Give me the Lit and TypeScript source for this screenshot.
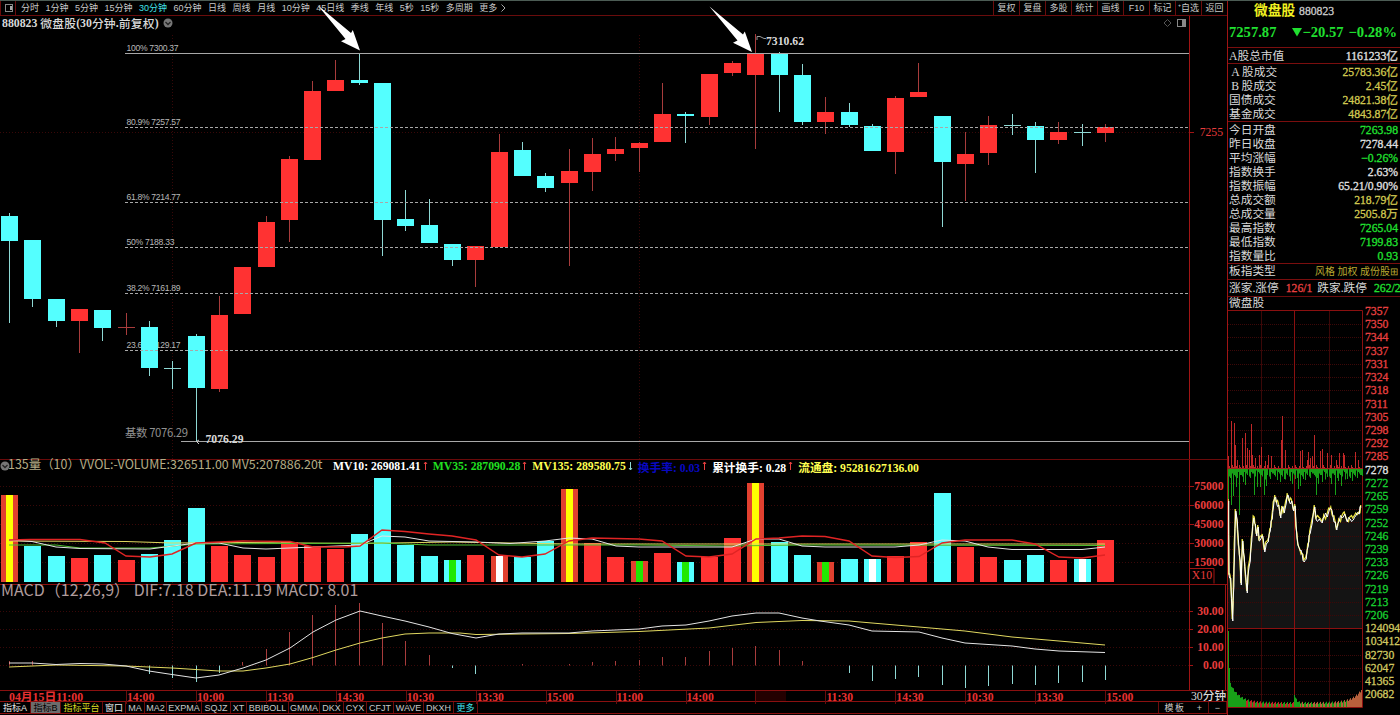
import {LitElement, html, svg, css, nothing} from 'lit';
import {customElement} from 'lit/decorators.js';
import {classMap} from 'lit/directives/class-map.js';

// [high, body top, body bottom, low, falling]
type Candle = [number, number, number, number, number];
type Point = [number, number];

const STEP = 23.32;
const slotX = (i: number) => 9 + i * STEP;

const CANDLES: Candle[] = [
  [213, 216, 241, 323, 1], [240, 240, 299, 307, 1], [299, 299, 321, 327, 1],
  [309, 309, 321, 353, 0], [310, 310, 328, 341, 1], [313, 327, 328, 335, 0],
  [321, 327, 368, 376, 1], [361, 368, 369, 389, 1], [334, 336, 388, 441, 1],
  [296, 315, 389, 392, 0], [267, 267, 314, 314, 0], [216, 222, 267, 267, 0],
  [156, 159, 220, 242, 0], [81, 91, 160, 160, 0], [60, 80, 91, 91, 0],
  [53, 80, 83, 85, 1], [83, 83, 220, 256, 1], [190, 219, 226, 231, 1],
  [199, 225, 243, 243, 1], [244, 244, 260, 266, 1], [246, 246, 260, 287, 0],
  [134, 152, 247, 247, 0], [142, 150, 176, 176, 1], [173, 176, 188, 192, 1],
  [149, 171, 183, 266, 0], [138, 154, 172, 191, 0], [137, 149, 154, 161, 0],
  [142, 143, 148, 172, 0], [83, 114, 142, 142, 0], [112, 114, 116, 143, 1],
  [74, 74, 117, 125, 0], [61, 63, 73, 76, 0], [34, 53, 75, 149, 0],
  [52, 53, 75, 112, 1], [64, 75, 122, 125, 1], [97, 112, 122, 134, 0],
  [103, 112, 125, 127, 1], [124, 126, 151, 151, 1], [96, 98, 152, 174, 0],
  [63, 92, 97, 97, 0], [116, 116, 162, 227, 1], [132, 154, 164, 201, 0],
  [116, 125, 153, 165, 0], [114, 125, 126, 135, 1], [122, 126, 140, 173, 1],
  [122, 132, 140, 144, 0], [124, 132, 133, 146, 1], [124, 127, 133, 142, 0],
];

const VOLUME_TOPS = [
  495, 546, 556, 558, 555, 560, 554, 540, 508, 546, 555, 557, 542, 546, 549,
  534, 478, 545, 556, 560, 555, 556, 557, 541, 489, 543, 557, 561, 553, 562,
  557, 538, 483, 542, 555, 562, 559, 559, 556, 542, 493, 547, 557, 560, 555,
  560, 559, 540,
];

const VOLUME_STRIPES: Record<number, string> = {
  0: 'yellow', 19: 'green', 21: 'white', 24: 'yellow', 27: 'green',
  29: 'green', 32: 'yellow', 35: 'green', 37: 'white', 46: 'white',
};

const VOLUME_LINES: [string, Point[]][] = [
  ['yellow', [[9, 541], [126, 541.5], [172, 543], [243, 542.5], [360, 543.5], [452, 542], [510, 543], [569, 544], [1105, 544]]],
  ['green', [[9, 545], [56, 545], [80, 548], [150, 548], [196, 544], [382, 543], [429, 545], [639, 545], [732, 546], [802, 545], [1105, 545.5]]],
  ['white', [[9, 540], [32, 541.5], [56, 547], [80, 548.5], [150, 549], [196, 543], [219, 543], [243, 548], [266, 549], [313, 547], [360, 545], [382, 536], [405, 537], [429, 541], [476, 542], [510, 543.5], [545, 541], [569, 538], [592, 539], [616, 546], [639, 547], [732, 547], [756, 539], [779, 539], [802, 546], [825, 547], [895, 547], [919, 545], [942, 540], [965, 541], [988, 547], [1012, 549.5], [1082, 549.5], [1105, 547]]],
  ['red', [[9, 540], [30, 539.5], [80, 539.5], [105, 543], [126, 556], [150, 557], [172, 554], [196, 543], [243, 541], [290, 541.5], [313, 547], [345, 547], [360, 546], [382, 530], [405, 531.5], [429, 534], [452, 536], [476, 540], [499, 555], [522, 557], [545, 554], [569, 541], [592, 538], [639, 539], [662, 541], [686, 556], [709, 557], [732, 554], [756, 539], [779, 538], [802, 536], [825, 536.5], [849, 541], [872, 556], [895, 557.5], [919, 556.5], [942, 543], [965, 540], [1012, 540], [1035, 544], [1059, 557], [1082, 558], [1105, 555]]],
];

const MACD_ZERO = 665.5;
const MACD_BARS: Point[] = [
  [0, 661], [1, 661], [6, 674], [7, 678], [8, 682], [9, 673], [10, 662],
  [11, 649], [12, 632], [13, 615], [14, 605], [15, 603], [16, 623], [17, 641],
  [18, 655], [19, 668], [20, 674], [22, 664], [24, 664], [25, 662], [26, 661],
  [27, 660], [28, 657], [29, 657], [30, 651], [31, 648], [32, 646], [33, 650],
  [34, 661], [36, 673], [37, 681], [38, 679], [39, 677], [40, 685], [41, 688],
  [42, 686], [43, 684], [44, 685], [45, 683], [46, 682], [47, 680],
];

const DIF: Point[] = [[9, 663], [32, 663], [56, 664.5], [80, 663.5], [103, 664], [126, 666], [149, 671], [172, 674.5], [196, 678], [219, 675], [243, 668], [266, 660], [290, 648], [313, 632], [336, 620], [360, 611], [382, 616], [405, 621], [429, 627], [452, 633.5], [476, 638], [499, 634], [522, 633], [569, 633], [592, 631], [639, 629], [662, 626], [686, 625], [709, 621], [732, 616], [756, 613], [779, 613], [802, 618], [820, 621], [849, 625], [872, 631], [919, 632], [942, 638], [965, 643], [1012, 646], [1035, 649], [1059, 651], [1105, 652.5]];
const DEA: Point[] = [[9, 667], [56, 665], [126, 666], [172, 668], [219, 671], [243, 671], [266, 668], [290, 664], [313, 657.5], [336, 650], [360, 643], [382, 638], [405, 634], [429, 633], [460, 633], [476, 634.5], [569, 633.5], [639, 631.5], [709, 628], [756, 622.5], [802, 620.5], [849, 621], [872, 623], [919, 627], [965, 631], [1012, 637], [1059, 641], [1105, 645]];

// [y, label, label width]
const FIB_LEVELS: [number, string, number][] = [
  [127.5, '80.9% 7257.57', 54],
  [202.5, '61.8% 7214.77', 54],
  [247.5, '50% 7188.33', 48],
  [293.5, '38.2% 7161.89', 54],
  [350.5, '23.6% 7129.17', 54],
];

const INTRADAY: Point[] = [[1228.5, 500], [1228.9, 575], [1230.5, 577], [1232.5, 620], [1233.6, 585], [1234.5, 545], [1235.5, 510], [1237, 520], [1238.5, 545], [1240, 560], [1241, 584], [1242.5, 540], [1244, 556], [1245.5, 575], [1247, 592], [1248.5, 568], [1250, 560], [1251.5, 540], [1253.5, 517], [1255, 523], [1256.5, 535], [1258, 526], [1259, 540], [1261, 537], [1262.5, 535], [1264.5, 551], [1266, 543], [1268, 541], [1270, 530], [1272, 518], [1273.5, 503], [1275, 496], [1276.5, 503], [1278.5, 504], [1280.5, 517], [1282, 507], [1284, 512], [1286, 502], [1287.5, 494], [1289.5, 502], [1291.5, 500], [1293.5, 510], [1295, 505], [1296, 527], [1298, 545], [1300, 550], [1302, 554], [1304, 561], [1306, 558], [1308, 545], [1310, 532], [1312, 522], [1314.5, 506], [1316, 519], [1319, 518], [1322, 522], [1324, 516], [1327, 516], [1329, 509], [1331, 508], [1333, 517], [1335, 521], [1336.5, 529], [1339, 520], [1342, 517], [1344.5, 513], [1347, 521], [1350, 518], [1353, 519], [1356, 514], [1359, 513], [1361, 506]];

// [x, length] of the advance and decline spikes around the zero line
const ADVANCES: Point[] = [[1228, 12], [1231, 47], [1234, 45], [1235, 23], [1237, 8], [1242, 30], [1245, 35], [1247, 20], [1249, 18], [1251, 44], [1252, 13], [1255, 10], [1259, 13], [1261, 21], [1265, 7], [1268, 13], [1271, 12], [1281, 28], [1282, 52], [1285, 18], [1300, 17], [1302, 18], [1307, 8], [1308, 16], [1310, 10], [1312, 12], [1314, 33], [1320, 17], [1322, 19], [1327, 15], [1331, 13], [1336, 8], [1339, 15], [1343, 15], [1344, 13], [1355, 16], [1358, 8]];
const DECLINES: Point[] = [[1228, 36], [1231, 36], [1233, 27], [1236, 18], [1239, 46], [1243, 13], [1245, 16], [1250, 7], [1254, 26], [1257, 18], [1260, 18], [1264, 26], [1266, 17], [1270, 10], [1277, 11], [1280, 13], [1284, 10], [1290, 12], [1292, 15], [1295, 10], [1298, 20], [1300, 17], [1303, 10], [1305, 11], [1316, 26], [1318, 15], [1322, 13], [1327, 8], [1331, 15], [1335, 26], [1338, 12], [1341, 17], [1347, 10], [1352, 12], [1357, 5], [1362, 7]];

const PERIODS = ['分时', '1分钟', '5分钟', '15分钟', '30分钟', '60分钟', '日线', '周线', '月线', '10分钟', '45日线', '季线', '年线', '5秒', '15秒', '多周期', '更多'];
const TOOLS = ['复权', '复盘', '多股', '统计', '画线', 'F10', '标记', '⁺自选', '返回'];
const TIMES = ['14:00', '10:00', '11:30', '14:30', '10:30', '13:30', '15:00', '11:00', '14:00', '', '11:30', '14:30', '10:30', '13:30', '15:00'];

// [text, cell width, modifier]
const TABS: [string, number, string][] = [
  ['指标A', 31, 'bright'], ['指标B', 30, 'active'], ['指标平台', 42, 'yellow'],
  ['窗口', 23, 'bright'], ['MA', 19, ''], ['MA2', 22, ''], ['EXPMA', 35, ''],
  ['SQJZ', 29, ''], ['XT', 16, ''], ['BBIBOLL', 42, ''], ['GMMA', 31, ''],
  ['DKX', 24, ''], ['CYX', 23, ''], ['CFJT', 27, ''], ['WAVE', 30, ''],
  ['DKXH', 30, ''], ['更多', 24, 'cyan'],
];

const QUOTE_GROUPS: [string, string, string][][] = [
  [['A股总市值', '1161233亿', 'white']],
  [
    ['\u2009A\u2009股成交', '25783.36亿', 'yellow'],
    ['\u2009B\u2009股成交', '2.45亿', 'yellow'],
    ['国债成交', '24821.38亿', 'yellow'],
    ['基金成交', '4843.87亿', 'yellow'],
  ],
  [
    ['今日开盘', '7263.98', 'green'],
    ['昨日收盘', '7278.44', 'white'],
    ['平均涨幅', '−0.26%', 'green'],
    ['指数换手', '2.63%', 'white'],
    ['指数振幅', '65.21/0.90%', 'white'],
    ['总成交额', '218.79亿', 'yellow'],
    ['总成交量', '2505.8万', 'yellow'],
    ['最高指数', '7265.04', 'green'],
    ['最低指数', '7199.83', 'green'],
    ['指数量比', '0.93', 'green'],
  ],
];

const PRICE_SCALE = [7357, 7350, 7344, 7337, 7331, 7324, 7318, 7311, 7305, 7298, 7292, 7285, 7278, 7272, 7265, 7259, 7252, 7246, 7239, 7233, 7226, 7219, 7213, 7206];
const VOLUME_SCALE = [124094, 103412, 82730, 62047, 41365, 20682];

const toPoints = (points: Point[]) => points.map((p) => p.join(',')).join(' ');

@customElement('kline-chart')
export class KlineChart extends LitElement {
  static styles = css`
    :host {
      display: block;
      font-family: 'Liberation Serif', 'Noto Sans CJK SC', serif;
      color: #d8d8d8;
    }

    svg {
      display: block;
      overflow: visible;
    }

    text {
      white-space: pre;
    }

    .panel {
      box-sizing: border-box;
      display: grid;
      grid-template-columns: 1189px 37px;
    }

    .price {
      height: 443px;
    }

    .volume {
      height: 125px;
      border-top: 1px solid #6a0a0a;
    }

    .macd {
      height: 106px;
      border-top: 1px solid #8a1010;
    }

    .plot {
      display: flex;
      flex-direction: column;
      min-width: 0;
    }

    .scale {
      border-left: 1px solid #a01414;
    }

    .macd .scale {
      border-right: 1px solid #a01414;
    }

    .title {
      display: flex;
      align-items: center;
      height: 15px;
      padding: 0 2px 1px 2px;
      box-sizing: border-box;
      font-size: 11.8px;
      font-weight: bold;
      white-space: pre;
    }

    .title .cjk {
      font-weight: 500;
      letter-spacing: 0.15px;
    }

    .title .toggle {
      margin-left: 4px;
    }

    .title .tools {
      margin-left: auto;
    }

    .volume-head {
      display: flex;
      align-items: center;
      height: 14px;
      box-sizing: border-box;
      padding-bottom: 2px;
      font-size: 11.7px;
      font-weight: bold;
      white-space: nowrap;
    }

    .volume-name {
      width: 325px;
      margin-left: -2px;
      font: 12.45px/9px 'Noto Sans CJK SC', sans-serif;
      color: #b5ad86;
      padding-bottom: 4px;
      white-space: pre;
    }

    .macd-head {
      height: 13px;
      font: 16px/9px 'Noto Sans CJK SC', sans-serif;
      color: #b09c9c;
      padding-left: 1px;
      box-sizing: border-box;
      white-space: pre;
    }

    .reading.white { color: #fff; }
    .reading.green { color: #20e020; }
    .reading.yellow { color: #ffff50; }
    .reading.blue { color: #0808c0; }

    .fill-up { fill: #ff3232; }
    .fill-striped { fill: #e2402f; }
    .fill-down { fill: #54ffff; }
    .wick-up { stroke: #a83c3c; }
    .wick-down { stroke: #8ed8d4; }
    .stripe-yellow { fill: #ffff00; }
    .stripe-green { fill: #20e800; }
    .stripe-white { fill: #ffffff; }

    .level { stroke: #a8a8a8; }
    .dashed { stroke-dasharray: 3 2; }
    .grid { stroke: #380808; stroke-dasharray: 1 2; }
    .axis-tick { stroke: #a01414; }
    .level-label {
      font: 8.6px 'Liberation Sans', sans-serif;
      fill: #b8b8b8;
    }
    .base-label {
      font: 11.3px 'Noto Sans CJK SC', sans-serif;
      fill: #909090;
    }
    .extreme {
      font-size: 11.7px;
      font-weight: bold;
      fill: #d8d8d8;
    }
    .scale-label {
      font-size: 11.7px;
      font-weight: bold;
      fill: #e83c3c;
      text-anchor: end;
    }
    .scale-label.light { font-weight: normal; }

    .line { fill: none; stroke-width: 1; }
    .line.red { stroke: #e02424; stroke-width: 1.4; }
    .line.green { stroke: #50c030; }
    .line.yellow { stroke: #e0d860; }
    .line.white { stroke: #e4e4e4; }

    .times {
      display: grid;
      grid-template-columns: 126px repeat(14, 69.95px) 1fr 37px;
      height: 12px;
      box-sizing: border-box;
      border-top: 1px solid #8a1010;
      border-bottom: 1px solid #8a1010;
      font-size: 11.7px;
      font-weight: bold;
      line-height: 13px;
      color: #e83030;
      white-space: nowrap;
    }

    .time {
      border-left: 1px solid #6a0c0c;
    }

    .date {
      padding-left: 9px;
      font-size: 11.8px;
      line-height: 12px;
    }

    .dim {
      width: 30px;
      height: 10px;
      background: #240000;
    }

    .unit {
      color: #d8d8d8;
      font-weight: 500;
      font-size: 11.7px;
      line-height: 11px;
      padding-left: 1px;
    }
  `;

  render() {
    return html`
      <section class="panel price">
        <div class="plot">
          <div class="title">
            <span>880823 </span><span class="cjk">微盘股</span><span>(30</span><span class="cjk">分钟</span><span>.</span><span class="cjk">前复权</span><span>)</span>
            ${this._renderToggle('toggle')}
            <svg class="tools" width="24" height="10" viewBox="0 0 24 10">
              <path d="M4.500 1.500L8 5L4.500 8.500L1 5Z" fill="none" stroke="#555" />
              <rect x="14.500" y="1.500" width="8" height="7" fill="none" stroke="#888" />
              <rect x="19" y="2" width="3" height="6" fill="#888" />
            </svg>
          </div>
          ${this._renderPricePlot()}
        </div>
        <svg class="scale" width="36" height="443" viewBox="1190 16 36 443">
          <path class="axis-tick" d="M1190 132.500h4" />
          <text class="scale-label light" x="1223" y="136">7255</text>
        </svg>
      </section>
      <section class="panel volume">
        <div class="plot">
          <div class="volume-head">
            ${this._renderToggle('')}
            <span class="volume-name">135量（10）VVOL:-VOLUME:326511.00 MV5:207886.20t</span>
            ${this._renderReading('MV10: 269081.41', 'white', true)}
            ${this._renderReading('MV35: 287090.28', 'green', true)}
            ${this._renderReading('MV135: 289580.75', 'yellow', false)}
            ${this._renderReading('换手率: 0.03', 'blue', true)}
            ${this._renderReading('累计换手: 0.28', 'white', true)}
            ${this._renderReading('流通盘: 95281627136.00', 'yellow', null)}
          </div>
          ${this._renderVolumePlot()}
        </div>
        <svg class="scale" width="36" height="124" viewBox="1190 460 36 124">
          ${[75000, 60000, 45000, 30000, 15000].map(
            (v, i) => svg`
              <path class="axis-tick" d="M1190 ${486.5 + i * 19}h4" />
              <text class="scale-label" x="1223.500" y=${490 + i * 19}>${v}</text>
            `
          )}
          <path class="axis-tick" d="M1190 568.500h24v15" fill="none" />
          <text class="scale-label light" x="1212" y="578.500">X10</text>
        </svg>
      </section>
      <section class="panel macd">
        <div class="plot">
          <div class="macd-head">MACD（12,26,9） DIF:7.18 DEA:11.19 MACD: 8.01</div>
          ${this._renderMacdPlot()}
        </div>
        <svg class="scale" width="35" height="105" viewBox="1190 585 35 105">
          ${['30.00', '20.00', '10.00', '0.00'].map(
            (v, i) => svg`
              <path class="axis-tick" d="M1190 ${611.5 + i * 18}h3" />
              <text class="scale-label" x="1223.500" y=${614.5 + i * 18.2}>${v}</text>
            `
          )}
        </svg>
      </section>
      <div class="times">
        <div class="date">04月15日11:00</div>
        ${TIMES.map((t) => html`<div class="time">${t || html`<div class="dim"></div>`}</div>`)}
        <div class="unit">30分钟</div>
      </div>
    `;
  }

  _renderToggle(name: string) {
    return html`
      <svg class=${name} width="10" height="10" viewBox="0 0 10 10">
        <circle cx="5" cy="5" r="4.500" fill="#777" />
        <path d="M2.500 4L5 6.500L7.500 4" fill="none" stroke="#222" stroke-width="1.300" />
      </svg>
    `;
  }

  _renderReading(text: string, color: string, rising: boolean | null) {
    return html`<span class="reading ${color}">${text}</span>${rising === null
        ? nothing
        : html`<svg width="12" height="10" viewBox="0 0 12 10">
            ${rising
              ? svg`<path d="M4.500 9V1M3 3L4.500 1L6 3" fill="none" stroke="#e84040" />`
              : svg`<path d="M4.500 1V9M3 7L4.500 9L6 7" fill="none" stroke="#8ed8d4" />`}
          </svg>`}`;
  }

  _renderPricePlot() {
    return html`
      <svg width="1189" height="428" viewBox="0 31 1189 428">
        <path class="grid" d="M0 132.500H1189M172.500 35V459M639.500 35V459" />
        <text class="level-label" x="126.500" y="51" textLength="52">100% 7300.37</text>
        ${FIB_LEVELS.map(
          ([y, label, width]) => svg`
            <text class="level-label" x="126.500" y=${y - 2.5} textLength=${width}>${label}</text>
          `
        )}
        <text class="base-label" x="125" y="437" textLength="63">基数 7076.29</text>
        ${CANDLES.map((c, i) => this._renderCandle(c, i))}
        <path class="level" d="M125 53.500H1189" />
        <path class="level" d="M181 441.500H1189" />
        ${FIB_LEVELS.map(([y]) => svg`<path class="level dashed" d="M125 ${y}H1189" />`)}
        <path d="M757 40V36.500H760L764 38.500H766" fill="none" stroke="#999" />
        <path d="M199 444L196.500 441.500L199 440" fill="none" stroke="#ccc" />
        <text class="extreme" x="766" y="44.500">7310.62</text>
        <text class="extreme" x="205.500" y="443">7076.29</text>
        ${this._renderArrow(-392, -1.5)} ${this._renderArrow(0, 0)}
      </svg>
    `;
  }

  _renderCandle([high, top, bottom, low, falling]: Candle, i: number) {
    const x = Math.round(slotX(i));
    const kind = falling ? 'down' : 'up';
    return svg`
      <path class="wick-${kind}" d="M${x + 0.5} ${high}V${low}" />
      ${
        bottom - top < 2
          ? svg`<path class="wick-${kind}" d="M${x - 8} ${top + 0.5}h17" />`
          : svg`<rect class="fill-${kind}" x=${x - 8} y=${top} width="17" height=${bottom - top} />`
      }
    `;
  }

  _renderArrow(dx: number, dy: number) {
    return svg`
      <path
        transform="translate(${dx} ${dy})"
        d="M709.500 6.500L743 34.500L744.800 31.500L752 52L733 42.700L737.500 40.500Z"
        fill="#fff"
      />
    `;
  }

  _renderVolumePlot() {
    return html`
      <svg width="1189" height="110" viewBox="0 474 1189 110">
        <path
          class="grid"
          d="M0 486.500H1189M0 505.500H1189M0 524.500H1189M0 543.500H1189M0 562.500H1189M172.500 474V584M639.500 474V584"
        />
        ${VOLUME_TOPS.map((top, i) => {
          const x = Math.round(slotX(i));
          const stripe = VOLUME_STRIPES[i];
          const climax = stripe === 'yellow';
          const kind = CANDLES[i][4] && !climax ? 'down' : stripe ? 'striped' : 'up';
          return svg`
            <rect class="fill-${kind}" x=${x - 8} y=${top} width="17" height=${582 - top} />
            ${stripe ? svg`<rect class="stripe-${stripe}" x=${x - 3} y=${top} width="7" height=${582 - top} />` : nothing}
          `;
        })}
        ${VOLUME_LINES.map(([color, points]) => svg`<polyline class="line ${color}" points=${toPoints(points)} />`)}
      </svg>
    `;
  }

  _renderMacdPlot() {
    return html`
      <svg width="1189" height="92" viewBox="0 598 1189 92">
        <path
          class="grid"
          d="M0 611.500H1189M0 629.500H1189M0 647.500H1189M0 665.500H1189M172.500 598V690M639.500 598V690"
        />
        ${MACD_BARS.map(([i, y]) => {
          const kind = y > MACD_ZERO ? 'down' : 'up';
          return svg`<path class="wick-${kind}" d="M${Math.round(slotX(i)) + 0.5} ${MACD_ZERO}V${y}" />`;
        })}
        <polyline class="line yellow" points=${toPoints(DEA)} />
        <polyline class="line white" points=${toPoints(DIF)} />
      </svg>
    `;
  }
}

@customElement('intraday-chart')
export class IntradayChart extends LitElement {
  static styles = css`
    :host {
      display: grid;
      grid-template-columns: 136px 1fr;
      font-family: 'Liberation Serif', 'Noto Sans CJK SC', serif;
      font-size: 11.7px;
      color: #d8d8d8;
    }

    svg {
      display: block;
    }

    .name {
      height: 13px;
      padding-left: 1px;
      line-height: 14px;
    }

    .labels {
      display: flex;
      flex-direction: column;
      padding: 8px 0 0 1px;
    }

    .label {
      height: 13.22px;
      line-height: 13.22px;
      -webkit-text-stroke: 0.3px currentColor;
    }

    .label.red { color: #e84040; }
    .label.green { color: #18d030; }
    .label.white { color: #e0e0e0; }
    .label.yellow { color: #d0c860; }

    .area { fill: #141414; }
    .minor { stroke: #3c0808; }
    .major { stroke: #8a1010; fill: none; }
    .zero { stroke: #a02020; }
    .advance { fill: #c02828; }
    .decline { fill: #18a018; }
    .traded { fill: #b8603c; }
    .average { fill: none; stroke: #e8e040; stroke-width: 1.3; }
    .index { fill: none; stroke: #fff; stroke-width: 1; }
  `;

  render() {
    const rows = Array.from({length: 29}, (_, i) => 324 + i * 13.22);
    return html`
      <div>
        <div class="name">微盘股</div>
        <svg width="136" height="405" viewBox="1228 310 136 405">
          <polygon class="area" points="${toPoints(INTRADAY)} 1362,628 1228,628" />
          ${rows.map((y) => svg`<path class="minor" d="M1228 ${Math.round(y) + 0.5}H1363" stroke-dasharray="1 1" />`)}
          <path class="minor" d="M1261.500 310V707M1329.500 310V707" />
          <path class="major" d="M1228 310.500H1362.500V707.500H1228M1294.500 310V707M1228 628.500H1363" />
          ${this._renderSpikes()} ${this._renderTraded()}
          <path class="zero" d="M1228 468.500H1363" />
          <polyline class="average" points=${this._jagged(-1)} />
          <polyline class="index" points=${this._jagged(1)} />
        </svg>
      </div>
      <div class="labels">
        ${PRICE_SCALE.map(
          (v) => html`
            <div class=${classMap({label: true, red: v > 7278, white: v === 7278, green: v < 7278})}>${v}</div>
          `
        )}
        ${VOLUME_SCALE.map((v) => html`<div class="label yellow">${v}</div>`)}
      </div>
    `;
  }

  // Adds a small tick between neighbouring samples.
  _jagged(side: number) {
    const points: Point[] = [];
    INTRADAY.forEach(([x, y], i) => {
      const next = INTRADAY[i + 1];
      points.push([x + side * 0.3, y + side]);
      if (next) {
        const tick = side * (((i * 5) % 7) - 3);
        points.push([(x + next[0]) / 2, (y + next[1]) / 2 + tick]);
      }
    });
    return toPoints(points);
  }

  _renderSpikes() {
    const filler = Array.from({length: 134}, (_, i) => i);
    return svg`
      ${filler.map((i) => {
        const down = ((i * 7) % 5) * 1.5 + ((i * 11) % 4) * 1.5;
        const up = Math.max(0, ((i * 5) % 7) - 3);
        return svg`
          <rect class="decline" x=${1228 + i} y="469" width="1" height=${down} />
          <rect class="advance" x=${1228 + i} y=${468 - up} width="1" height=${up} />
        `;
      })}
      ${ADVANCES.map(([x, h]) => svg`<rect class="advance" x=${x} y=${468 - h} width="1" height=${h} />`)}
      ${DECLINES.map(([x, h]) => svg`<rect class="decline" x=${x} y="469" width="1" height=${h} />`)}
    `;
  }

  _renderTraded() {
    return Array.from({length: 134}, (_, i) => {
      const opening = i === 0 ? 73 : i === 1 ? 35 : 24 * Math.exp(-i / 9);
      const reopening = i >= 66 ? 9 * Math.exp(-(i - 66) / 2) : 0;
      const closing = 13 * Math.exp((i - 133) / 9);
      const h = opening + reopening + closing + 3 + ((i * 7) % 3);
      const green = i < 18 || (i > 65 && i < 72) || (i * 5) % 7 < 3;
      const kind = i > 118 ? 'traded' : green ? 'decline' : i < 66 ? 'advance' : 'traded';
      return svg`<rect class=${kind} x=${1228 + i} y=${707 - h} width="1" height=${h} />`;
    });
  }
}

@customElement('app-root')
export class AppRoot extends LitElement {
  static styles = css`
    :host {
      display: grid;
      grid-template-columns: 1227px 173px;
      width: 1400px;
      height: 715px;
      overflow: hidden;
      box-sizing: border-box;
      background: #000;
      border-top: 1px solid #4c5c54;
      color: #c8c8c8;
      font-family: 'Liberation Serif', 'Noto Sans CJK SC', serif;
    }

    .toolbar {
      display: flex;
      align-items: center;
      height: 15px;
      box-sizing: border-box;
      border-bottom: 1px solid #6a0c0c;
      font: 9px/15px 'Liberation Sans', 'Noto Sans CJK SC', sans-serif;
      white-space: nowrap;
    }

    .layout-icon {
      width: 16px;
      padding-left: 4px;
      box-sizing: border-box;
      border-right: 1px solid #6a0c0c;
      border-left: 1px solid #6a0c0c;
    }

    .layout-icon svg,
    .more svg {
      vertical-align: middle;
    }

    .periods {
      display: flex;
      gap: 6.5px;
      padding-left: 5px;
    }

    .more {
      margin-left: -3px;
    }

    .period.active {
      color: #40e0e8;
    }

    .tools {
      display: flex;
      margin-left: auto;
    }

    .tool {
      width: 26px;
      box-sizing: border-box;
      border-left: 1px solid #6a0c0c;
      text-align: center;
    }

    .tabs {
      display: flex;
      height: 12px;
      box-sizing: border-box;
      border-bottom: 1px solid #8a1010;
      font: 9px/12px 'Liberation Sans', 'Noto Sans CJK SC', sans-serif;
      white-space: nowrap;
    }

    .tab {
      box-sizing: border-box;
      border-right: 1px solid #6a0c0c;
      text-align: center;
    }

    .tab.bright { color: #e8e8e8; }
    .tab.yellow { color: #d8d820; }
    .tab.cyan { color: #40e0e8; }
    .tab.active {
      color: #000;
      background: #6c6c6c;
    }

    .template {
      width: 32px;
      margin-left: auto;
      border-left: 1px solid #6a0c0c;
      text-align: center;
      letter-spacing: 1.5px;
    }

    .zoom {
      width: 17px;
      border-right: 1px solid #6a0c0c;
      text-align: center;
    }

    .quote {
      box-sizing: border-box;
      border-left: 1px solid #a01414;
      font-size: 11.7px;
      min-width: 0;
      overflow: hidden;
    }

    .name-row {
      display: flex;
      align-items: baseline;
      gap: 4px;
      height: 20px;
      padding-left: 26px;
      line-height: 19px;
    }

    .code {
      -webkit-text-stroke: 0.3px currentColor;
    }

    .name {
      font-size: 13.7px;
      font-weight: bold;
      color: #f0f020;
    }

    .price-row {
      display: flex;
      justify-content: space-between;
      align-items: center;
      height: 26px;
      padding: 0 3px 4px 1px;
      box-sizing: border-box;
      font-size: 14.6px;
      font-weight: bold;
      color: #20e030;
    }

    .change {
      display: flex;
      align-items: center;
      margin-left: 11px;
    }

    .group {
      box-sizing: border-box;
      border-top: 1px solid #7a0e0e;
      padding: 1px 2px 0 1px;
    }

    .row {
      display: flex;
      justify-content: space-between;
      height: 14px;
      line-height: 15px;
      white-space: nowrap;
      color: #d8d8d8;
    }

    .value {
      -webkit-text-stroke: 0.3px currentColor;
    }

    .value.white { color: #e0e0e0; }
    .value.yellow { color: #d0c850; }
    .value.green { color: #20e030; }
    .value.red { color: #e84040; }
    .value.tags {
      color: #b8a830;
      font-size: 10px;
      -webkit-text-stroke: 0;
    }

    .tags-group {
      height: 16px;
      padding-top: 0;
    }

    .limits {
      justify-content: flex-start;
      gap: 5px;
    }

    .limits .value {
      margin-left: 2px;
    }

    .limits-group {
      height: 18px;
      border-bottom: 1px solid #6a0c0c;
    }
  `;

  render() {
    return html`
      <main>
        ${this._renderToolbar()}
        <kline-chart></kline-chart>
        ${this._renderTabs()}
      </main>
      <aside class="quote">
        <div class="name-row"><span class="name">微盘股</span><span class="code">880823</span></div>
        <div class="price-row">
          <span>7257.87</span>
          <span class="change">
            <svg width="10" height="10" viewBox="0 0 10 10"><path d="M0 1H10L5 9.500Z" fill="#20e030" /></svg>−20.57
          </span>
          <span>−0.28%</span>
        </div>
        ${QUOTE_GROUPS.map(
          (rows) => html`
            <div class="group">
              ${rows.map(
                ([label, value, color]) => html`
                  <div class="row">
                    <span>${label}</span>
                    <span class="value ${color}">${value}</span>
                  </div>
                `
              )}
            </div>
          `
        )}
        <div class="group tags-group">
          <div class="row"><span>板指类型</span><span class="value tags">风格 加权 成份股⊞</span></div>
        </div>
        <div class="group limits-group">
          <div class="row limits">
            <span>涨家.涨停</span><span class="value red">126/1</span>
            <span>跌家.跌停</span><span class="value green">262/2</span>
          </div>
        </div>
        <intraday-chart></intraday-chart>
      </aside>
    `;
  }

  _renderToolbar() {
    return html`
      <div class="toolbar">
        <div class="layout-icon">
          <svg width="8" height="8" viewBox="0 0 8 8">
            <rect x="0.500" y="0.500" width="7" height="7" fill="none" stroke="#888" />
            <rect x="5" y="2" width="2" height="4" fill="#aaa" />
          </svg>
        </div>
        <div class="periods">
          ${PERIODS.map((p) => html`<span class=${classMap({period: true, active: p === '30分钟'})}>${p}</span>`)}
          <span class="more">
            <svg width="5" height="8" viewBox="0 0 5 8"><path d="M0.500 0.500L4 4L0.500 7.500" fill="none" stroke="#aaa" /></svg>
          </span>
        </div>
        <div class="tools">${TOOLS.map((t) => html`<span class="tool">${t}</span>`)}</div>
      </div>
    `;
  }

  _renderTabs() {
    return html`
      <div class="tabs">
        ${TABS.map(([text, width, kind]) => html`<span class="tab ${kind}" style="width: ${width}px">${text}</span>`)}
        <span class="template">模板</span>
        <span class="zoom">+</span>
        <span class="zoom">−</span>
      </div>
    `;
  }
}
